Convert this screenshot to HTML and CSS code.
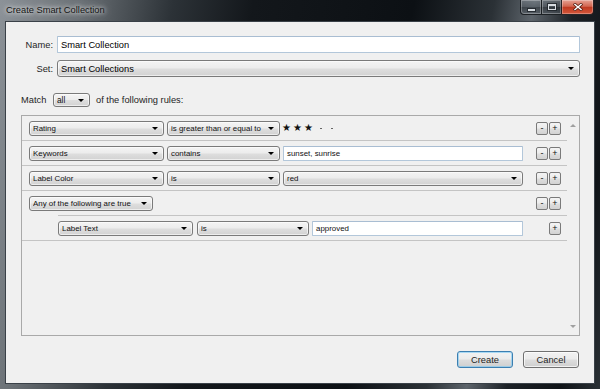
FILE: index.html
```html
<!DOCTYPE html>
<html>
<head>
<meta charset="utf-8">
<title>Create Smart Collection</title>
<link rel="stylesheet" href="styles.css">
</head>
<body>
<div class="window">
  <div class="titlebar">
    <span class="title">Create Smart Collection</span>
    <div class="caption">
      <span class="cbtn min"><span class="glyph-min"></span></span>
      <span class="cbtn max"><span class="glyph-max"></span></span>
      <span class="cbtn close"><svg width="10" height="8" viewBox="0 0 10 8"><path d="M2 1.5 L8 6.5 M8 1.5 L2 6.5" stroke="#5a2418" stroke-width="3" stroke-linecap="square"/><path d="M2 1.5 L8 6.5 M8 1.5 L2 6.5" stroke="#ffffff" stroke-width="1.5" stroke-linecap="square"/></svg></span>
    </div>
  </div>
  <div class="client">
    <div class="field-row">
      <span class="field-label">Name:</span>
      <div class="textbox big">Smart Collection</div>
    </div>
    <div class="field-row set-row">
      <span class="field-label">Set:</span>
      <div class="combo big"><span class="combo-text">Smart Collections</span><span class="arrow"></span></div>
    </div>
    <div class="match-row">
      <span class="match-label">Match</span>
      <div class="combo small w-all"><span class="combo-text">all</span><span class="arrow"></span></div>
      <span class="match-tail">of the following rules:</span>
    </div>
    <div class="panel">
      <div class="rules">
        <div class="rule">
          <div class="combo small w-field"><span class="combo-text">Rating</span><span class="arrow"></span></div>
          <div class="combo small w-op"><span class="combo-text">is greater than or equal to</span><span class="arrow"></span></div>
          <div class="stars"><span class="star">★</span><span class="star">★</span><span class="star">★</span><span class="dot"></span><span class="dot"></span></div>
          <div class="pm-group"><span class="pm">-</span><span class="pm">+</span></div>
        </div>
        <div class="rule">
          <div class="combo small w-field"><span class="combo-text">Keywords</span><span class="arrow"></span></div>
          <div class="combo small w-op"><span class="combo-text">contains</span><span class="arrow"></span></div>
          <div class="textbox small w-val">sunset, sunrise</div>
          <div class="pm-group"><span class="pm">-</span><span class="pm">+</span></div>
        </div>
        <div class="rule">
          <div class="combo small w-field"><span class="combo-text">Label Color</span><span class="arrow"></span></div>
          <div class="combo small w-op"><span class="combo-text">is</span><span class="arrow"></span></div>
          <div class="combo small w-val"><span class="combo-text">red</span><span class="arrow"></span></div>
          <div class="pm-group"><span class="pm">-</span><span class="pm">+</span></div>
        </div>
        <div class="group">
          <div class="rule group-head">
            <div class="combo small w-any"><span class="combo-text">Any of the following are true</span><span class="arrow"></span></div>
            <div class="pm-group"><span class="pm">-</span><span class="pm">+</span></div>
          </div>
          <div class="rule nested">
            <div class="combo small w-field"><span class="combo-text">Label Text</span><span class="arrow"></span></div>
            <div class="combo small w-op2"><span class="combo-text">is</span><span class="arrow"></span></div>
            <div class="textbox small w-val2">approved</div>
            <div class="pm-group"><span class="pm">+</span></div>
          </div>
        </div>
      </div>
      <div class="scroll">
        <span class="sarrow up"></span>
        <span class="sarrow down"></span>
      </div>
    </div>
    <div class="actions">
      <button class="btn default">Create</button>
      <button class="btn">Cancel</button>
    </div>
  </div>
</div>
</body>
</html>
```
FILE: styles.css
```css
* { box-sizing: border-box; }
html, body { margin: 0; padding: 0; }
body {
  width: 600px;
  height: 389px;
  overflow: hidden;
  font-family: "Liberation Sans", Arial, sans-serif;
  background:
    linear-gradient(100deg, #8c9298 0%, #6a7075 12%, #2c3237 26%, #13171b 38%, #0c1014 62%, #2b3136 74%, #5d646b 80%, #1c2126 86%, #0f1317 94%, #2a3035 100%);
}
.window {
  height: 389px;
  display: flex;
  flex-direction: column;
  padding: 0 5px 5px 5px;
}
.titlebar {
  height: 21px;
  flex: none;
  display: flex;
  align-items: flex-start;
}
.title {
  padding: 4px 0 0 1px;
  font-size: 9.3px;
  line-height: 13px;
  color: #141414;
  text-shadow: 0 0 4px #ffffff, 0 0 8px rgba(255,255,255,0.8);
}
.caption {
  margin-left: auto;
  margin-right: 1px;
  display: flex;
}
.cbtn {
  height: 15px;
  border: 1px solid rgba(20,24,28,0.9);
  border-top: none;
  box-shadow: inset 0 0 0 1px rgba(255,255,255,0.28);
  display: flex;
  align-items: center;
  justify-content: center;
  background: linear-gradient(rgba(140,148,156,0.45), rgba(90,98,106,0.35) 50%, rgba(30,36,42,0.4) 51%, rgba(90,98,106,0.45));
}
.min { width: 21px; border-radius: 0 0 0 4px; border-right: none; }
.max { width: 20px; border-right: none; }
.close {
  width: 33px;
  border-radius: 0 0 4px 0;
  background: linear-gradient(#e6a294, #d26650 45%, #bf3a21 52%, #d4573b 100%);
}
.glyph-min {
  width: 7px;
  height: 2px;
  margin-top: 5px;
  background: #d8dde2;
  box-shadow: 0 0 0 1px rgba(30,35,40,0.8);
}
.glyph-max {
  width: 8px;
  height: 6px;
  border: 1px solid #d8dde2;
  border-top-width: 2px;
  box-shadow: 0 0 0 1px rgba(30,35,40,0.8);
}
.client {
  flex: 1;
  background: #f0f0f0;
  border: 1px solid #3a4148;
  display: flex;
  flex-direction: column;
  padding: 14px 14px 0 0;
  color: #000;
}
.field-row {
  display: flex;
  align-items: center;
  height: 17px;
}
.set-row { margin-top: 7px; }
.field-label {
  width: 47px;
  margin-right: 4px;
  text-align: right;
  font-size: 9.3px;
  color: #1e1e1e;
}
.big {
  flex: 1;
  height: 17px;
  font-size: 9.3px;
}
.textbox {
  background: #fff;
  border: 1px solid #b3c7da;
  border-top-color: #a9bdd2;
  border-radius: 1px;
  display: flex;
  align-items: center;
  padding-left: 3px;
  color: #000;
  white-space: nowrap;
}
.combo {
  position: relative;
  border: 1px solid #7a7a7a;
  border-radius: 3px;
  background: linear-gradient(#f4f4f4, #ececec 48%, #dedede 52%, #d2d2d2);
  box-shadow: inset 0 0 0 1px rgba(255,255,255,0.6);
  display: flex;
  align-items: center;
  padding-left: 3px;
  white-space: nowrap;
  overflow: hidden;
}
.combo-text { flex: 1; overflow: hidden; }
.arrow {
  flex: none;
  width: 0;
  height: 0;
  margin: 0 5px 0 3px;
  border-left: 3px solid transparent;
  border-right: 3px solid transparent;
  border-top: 3px solid #000;
}
.small {
  height: 15px;
  font-size: 7.9px;
  color: #111;
}
.match-row {
  margin-top: 16px;
  height: 14px;
  display: flex;
  align-items: center;
  padding-left: 15px;
  font-size: 9.3px;
  color: #1e1e1e;
}
.match-label { width: 32px; }
.w-all { width: 37px; height: 14px; font-size: 8.3px; }
.match-tail { margin-left: 6px; }
.panel {
  margin-top: 8px;
  margin-left: 15px;
  height: 221px;
  border: 1px solid #a9a9a9;
  display: flex;
  flex: none;
}
.rules { flex: 1; }
.rule {
  height: 25px;
  display: flex;
  align-items: center;
  padding: 0 6px 0 7px;
  border-bottom: 1px solid #c4c4c4;
}
.w-field { width: 135px; }
.w-op { width: 113px; margin-left: 3px; }
.w-val { width: 240px; margin-left: 3px; }
.w-any { width: 124px; }
.w-op2 { width: 112px; margin-left: 4px; }
.w-val2 { width: 211px; margin-left: 3px; }
.stars {
  margin-left: 1px;
  display: flex;
  align-items: center;
  font-family: "DejaVu Sans", sans-serif;
}
.star {
  width: 11px;
  font-size: 10px;
  line-height: 12px;
  color: #111;
  text-align: center;
}
.dot {
  width: 2px;
  height: 1px;
  background: #666;
  margin-left: 6px;
  margin-right: 3px;
}
.pm-group {
  margin-left: auto;
  display: flex;
  gap: 1px;
}
.pm {
  width: 12px;
  height: 13px;
  border: 1px solid #7a7a7a;
  border-radius: 2px;
  background: linear-gradient(#f4f4f4, #ececec 48%, #dedede 52%, #d2d2d2);
  display: flex;
  align-items: center;
  justify-content: center;
  font-size: 9px;
  line-height: 1;
  color: #111;
}
.group { border-bottom: 1px solid #c4c4c4; }
.group-head { height: 24px; border-bottom: none; }
.nested {
  margin-left: 36px;
  padding-left: 0;
  border-bottom: none;
  border-top: 1px solid #c4c4c4;
}
.scroll {
  width: 12px;
  display: flex;
  flex-direction: column;
  justify-content: space-between;
  align-items: center;
  padding: 8px 0 7px 0;
}
.sarrow {
  width: 0;
  height: 0;
  border-left: 3px solid transparent;
  border-right: 3px solid transparent;
}
.up { border-bottom: 3px solid #a0a0a0; }
.down { border-top: 3px solid #a0a0a0; }
.actions {
  margin-top: 15px;
  display: flex;
  justify-content: flex-end;
  gap: 10px;
  padding-right: 1px;
}
.btn {
  height: 17px;
  width: 56px;
  padding: 0;
  border: 1px solid #707070;
  border-radius: 3px;
  background: linear-gradient(#f2f2f2, #ebebeb 48%, #dddddd 52%, #cfcfcf);
  box-shadow: inset 0 0 0 1px rgba(255,255,255,0.7);
  font-family: "Liberation Sans", Arial, sans-serif;
  font-size: 9.3px;
  color: #1e1e1e;
}
.btn.default {
  border-color: #3c7fb1;
  box-shadow: inset 0 0 0 1px rgba(120,200,245,0.6);
}
```
